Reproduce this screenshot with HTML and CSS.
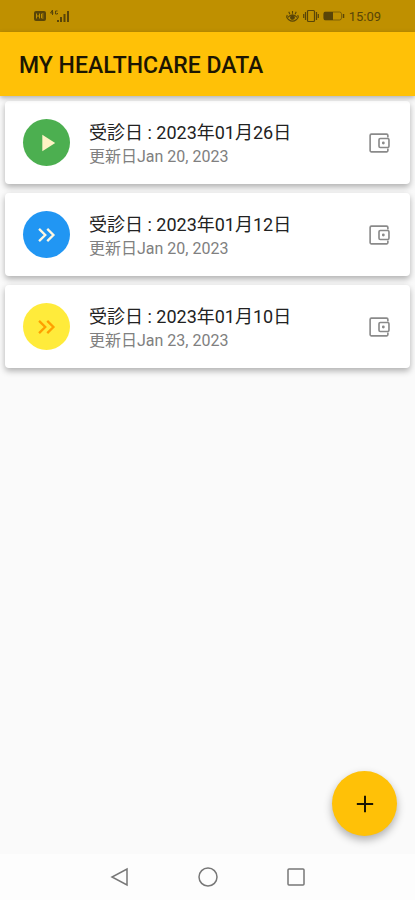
FILE: index.html
```
<!DOCTYPE html>
<html lang="ja">
<head>
    <meta charset="UTF-8">
    <meta name="viewport" content="width=device-width, initial-scale=1.0">
    <title>MY HEALTHCARE DATA</title>
    <link rel="stylesheet" href="styles.css">
</head>
<body>
    <div class="status-bar">
        <div class="status-group">
            <svg width="12" height="12" viewBox="0 0 12 12">
                <rect x="0" y="1" width="12" height="10" rx="2" fill="currentColor"/>
                <path d="M2.500 3.500v5M5.500 3.500v5M2.500 6h3M9.500 4h-2v4h2M7.500 6h2" fill="none" stroke="#bf9000" stroke-width="1"/>
            </svg>
            <svg width="20" height="14" viewBox="0 0 20 14">
                <path d="M2.500 1L.5 4h3M2.500 1v5M7.500 2h-2v3h2V4" fill="none" stroke="currentColor" stroke-width="1"/>
                <path d="M7 11h2v2H7zM10 8h2v5h-2zM13.500 5h2v8h-2zM17 2h2v11h-2z" fill="currentColor"/>
            </svg>
        </div>
        <div class="status-group">
            <svg width="13" height="13" viewBox="0 0 14 14" fill="none" stroke="currentColor" stroke-width="1.200">
                <path d="M1.500 5.500Q-.5 8 3 10.500Q7 13.500 11 10.500Q14.500 8 12.500 5.500M2 8Q7 2.500 12 8M7 1v3M3 2l1.200 2.500M11 2L9.800 4.500"/>
                <circle cx="7" cy="8" r="2" fill="currentColor"/>
            </svg>
            <svg width="16" height="14" viewBox="0 0 16 14" fill="none" stroke="currentColor" stroke-width="1.200">
                <rect x="4.500" y="1.500" width="7" height="11" rx="1"/>
                <path d="M2.500 3v8M13.500 3v8M.7 5v4M15.300 5v4"/>
            </svg>
            <svg width="22" height="12" viewBox="0 0 22 12">
                <rect x=".5" y="2" width="18" height="8" rx="2" fill="none" stroke="currentColor" stroke-opacity=".6"/>
                <path d="M1 2h9v8H1z" fill="currentColor"/>
                <path d="M20.500 4v4" stroke="currentColor" stroke-width="1.500"/>
            </svg>
            <span class="time">15:09</span>
        </div>
    </div>

    <header class="app-bar">
        <h1>MY HEALTHCARE DATA</h1>
    </header>

    <main class="content">
        <ul class="card-list">
            <li class="card">
                <span class="avatar green">
                    <svg width="28" height="28" viewBox="0 0 24 24"><path d="M8 5v14l11-7z" fill="currentColor"/></svg>
                </span>
                <div class="card-text">
                    <h2>受診日 : 2023年01月26日</h2>
                    <p>更新日Jan 20, 2023</p>
                </div>
                <button class="wallet" type="button" aria-label="Wallet">
                    <svg width="26" height="26" viewBox="0 0 24 24" fill="none" stroke="currentColor" stroke-width="1.500">
                        <path d="M20.200 7V5a1.200 1.200 0 0 0-1.200-1.200H5A1.200 1.200 0 0 0 3.800 5v14A1.200 1.200 0 0 0 5 20.200h14a1.200 1.200 0 0 0 1.200-1.200v-2"/>
                        <rect x="12" y="7.800" width="9.200" height="8.400" rx="1.200"/>
                        <circle cx="16" cy="12" r="1.300" fill="currentColor" stroke="none"/>
                    </svg>
                </button>
            </li>
            <li class="card">
                <span class="avatar blue">
                    <svg width="28" height="28" viewBox="0 0 24 24" fill="none" stroke="currentColor" stroke-width="2"><path d="M5.200 6.700l5.300 5.300-5.300 5.300M12.200 6.700l5.300 5.300-5.300 5.300"/></svg>
                </span>
                <div class="card-text">
                    <h2>受診日 : 2023年01月12日</h2>
                    <p>更新日Jan 20, 2023</p>
                </div>
                <button class="wallet" type="button" aria-label="Wallet">
                    <svg width="26" height="26" viewBox="0 0 24 24" fill="none" stroke="currentColor" stroke-width="1.500">
                        <path d="M20.200 7V5a1.200 1.200 0 0 0-1.200-1.200H5A1.200 1.200 0 0 0 3.800 5v14A1.200 1.200 0 0 0 5 20.200h14a1.200 1.200 0 0 0 1.200-1.200v-2"/>
                        <rect x="12" y="7.800" width="9.200" height="8.400" rx="1.200"/>
                        <circle cx="16" cy="12" r="1.300" fill="currentColor" stroke="none"/>
                    </svg>
                </button>
            </li>
            <li class="card">
                <span class="avatar yellow">
                    <svg width="28" height="28" viewBox="0 0 24 24" fill="none" stroke="currentColor" stroke-width="2"><path d="M5.200 6.700l5.300 5.300-5.300 5.300M12.200 6.700l5.300 5.300-5.300 5.300"/></svg>
                </span>
                <div class="card-text">
                    <h2>受診日 : 2023年01月10日</h2>
                    <p>更新日Jan 23, 2023</p>
                </div>
                <button class="wallet" type="button" aria-label="Wallet">
                    <svg width="26" height="26" viewBox="0 0 24 24" fill="none" stroke="currentColor" stroke-width="1.500">
                        <path d="M20.200 7V5a1.200 1.200 0 0 0-1.200-1.200H5A1.200 1.200 0 0 0 3.800 5v14A1.200 1.200 0 0 0 5 20.200h14a1.200 1.200 0 0 0 1.200-1.200v-2"/>
                        <rect x="12" y="7.800" width="9.200" height="8.400" rx="1.200"/>
                        <circle cx="16" cy="12" r="1.300" fill="currentColor" stroke="none"/>
                    </svg>
                </button>
            </li>
        </ul>
        <button class="fab" type="button" aria-label="Add">
            <svg width="28" height="28" viewBox="0 0 24 24"><path d="M12 5v14M5 12h14" stroke="currentColor" stroke-width="1.700"/></svg>
        </button>
    </main>

    <nav class="nav-bar">
        <button type="button" aria-label="Back">
            <svg width="20" height="20" viewBox="0 0 20 20"><path d="M17 2v16L2 10z"/></svg>
        </button>
        <button type="button" aria-label="Home">
            <svg width="20" height="20" viewBox="0 0 20 20"><circle cx="10" cy="10" r="9"/></svg>
        </button>
        <button type="button" aria-label="Recent apps">
            <svg width="20" height="20" viewBox="0 0 20 20"><rect x="2" y="2" width="16" height="16" rx="1"/></svg>
        </button>
    </nav>
</body>
</html>
```
FILE: styles.css
```
* {
    box-sizing: border-box;
}

body {
    font-family: Roboto, "Noto Sans CJK JP", sans-serif;
    background-color: #fafafa;
    display: flex;
    flex-direction: column;
    min-height: 100vh;
    margin: 0;
}

h1, h2, p, ul {
    margin: 0;
    padding: 0;
}

button {
    display: flex;
    align-items: center;
    justify-content: center;
    padding: 0;
    border: none;
    background: none;
    cursor: pointer;
}

/* Status bar */
.status-bar {
    display: flex;
    justify-content: space-between;
    align-items: center;
    height: 32px;
    padding: 0 34px;
    background-color: #bf9000;
    color: #594508;
}

.status-group {
    display: flex;
    align-items: center;
    gap: 4px;
}

.time {
    font-size: 13px;
}

/* App bar */
.app-bar {
    display: flex;
    align-items: center;
    height: 64px;
    padding: 4px 19px 0;
    background-color: #ffc107;
    box-shadow: 0 2px 5px rgba(0, 0, 0, 0.3);
    z-index: 1;
}

h1 {
    font-size: 23px;
    font-weight: 500;
    line-height: 28px;
    color: #1c1602;
}

/* Records */
.content {
    position: relative;
    flex: 1;
    padding: 5px;
}

.card-list {
    display: flex;
    flex-direction: column;
    gap: 9px;
    list-style: none;
}

.card {
    display: flex;
    align-items: center;
    height: 83px;
    padding: 0 18px;
    background-color: #fff;
    border-radius: 4px;
    box-shadow: 0 3px 6px rgba(0, 0, 0, 0.3);
}

.avatar {
    display: flex;
    align-items: center;
    justify-content: center;
    width: 47px;
    height: 47px;
    border-radius: 50%;
}

.green {
    background-color: #4caf50;
    color: #fff3c4;
}

.blue {
    background-color: #2196f3;
    color: #fff8e1;
}

.yellow {
    background-color: #ffeb3b;
    color: #ffa000;
}

.card-text {
    flex: 1;
    margin-left: 19px;
    padding-top: 3px;
}

h2 {
    font-size: 18px;
    font-weight: 400;
    line-height: 25px;
    color: #222;
}

.card-text p {
    font-size: 16px;
    line-height: 24px;
    color: #808080;
}

.wallet {
    color: #8a8a8a;
}

.fab {
    position: absolute;
    right: 18px;
    bottom: 18px;
    width: 65px;
    height: 65px;
    border-radius: 50%;
    background-color: #ffc107;
    color: #1c1602;
    box-shadow: 0 4px 8px rgba(0, 0, 0, 0.3);
}

/* Navigation bar */
.nav-bar {
    display: flex;
    justify-content: center;
    gap: 68px;
    height: 46px;
    background-color: #fdfdfd;
}

.nav-bar svg {
    fill: none;
    stroke: #777;
    stroke-width: 1.5;
}
```
